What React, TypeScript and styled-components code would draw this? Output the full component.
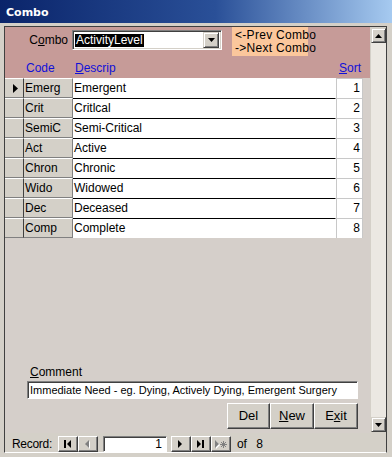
import styled, { createGlobalStyle } from 'styled-components';

const GlobalStyle = createGlobalStyle`
  html, body {
    margin: 0;
    padding: 0;
    background: #d4d0c8;
  }
  body {
    font-family: "Liberation Sans", Arial, sans-serif;
    font-size: 12px;
    color: #000;
  }
`;

const rows = [
  { code: 'Emerg', descrip: 'Emergent', sort: 1 },
  { code: 'Crit', descrip: 'Critlcal', sort: 2 },
  { code: 'SemiC', descrip: 'Semi-Critical', sort: 3 },
  { code: 'Act', descrip: 'Active', sort: 4 },
  { code: 'Chron', descrip: 'Chronic', sort: 5 },
  { code: 'Wido', descrip: 'Widowed', sort: 6 },
  { code: 'Dec', descrip: 'Deceased', sort: 7 },
  { code: 'Comp', descrip: 'Complete', sort: 8 },
];

const COLS = '19px 49px 263px 27px';

const Window = styled.div`
  width: 392px;
  height: 457px;
  display: flex;
  flex-direction: column;
  background: #d4d0c8;
  overflow: hidden;
`;

const TitleBar = styled.div`
  height: 23px;
  flex: none;
  display: flex;
  align-items: center;
  padding: 2px 0 0 6px;
  box-sizing: border-box;
  background: linear-gradient(to right, #0a246a 0%, #2a5098 55%, #a6caf0 100%);
  color: #fff;
  font-family: "DejaVu Sans", Verdana, sans-serif;
  font-weight: bold;
  font-size: 11px;
`;

const Frame = styled.div`
  flex: 1;
  display: flex;
  padding: 3px 5px 4px 4px;
  min-height: 0;
`;

const Client = styled.div`
  flex: 1;
  display: flex;
  flex-direction: column;
  border: 1px solid #404040;
  border-bottom-color: #fff;
`;

const Main = styled.div`
  flex: 1;
  display: flex;
  min-height: 0;
`;

const FormArea = styled.div`
  width: 365px;
  display: flex;
  flex-direction: column;
  background: #d5cfca;
`;

const Header = styled.div`
  height: 51px;
  flex: none;
  background: #c69b98;
  display: flex;
  flex-direction: column;
`;

const HeaderTop = styled.div`
  height: 30px;
  display: flex;
  align-items: flex-start;
`;

const ComboLabel = styled.div`
  width: 63px;
  margin-top: 3px;
  line-height: 20px;
  text-align: right;
`;

const ComboBox = styled.div`
  width: 150px;
  height: 20px;
  margin: 3px 0 0 4px;
  box-sizing: border-box;
  background: #fff;
  border: 1px solid;
  border-color: #808080 #fff #fff #808080;
  box-shadow: inset 1px 1px 0 #404040, inset -1px -1px 0 #d4d0c8;
  display: flex;
  align-items: center;
  padding: 0 2px 0 2px;
`;

const Selected = styled.span`
  background: #000;
  color: #fff;
  line-height: 13px;
  padding: 0 1px;
`;

const DropButton = styled.div`
  margin-left: auto;
  width: 16px;
  height: 16px;
  box-sizing: border-box;
  background: #d4d0c8;
  border: 1px solid;
  border-color: #d4d0c8 #404040 #404040 #d4d0c8;
  box-shadow: inset 1px 1px 0 #fff, inset -1px -1px 0 #808080;
  display: flex;
  align-items: center;
  justify-content: center;
`;

const PrevNext = styled.div`
  width: 76px;
  height: 29px;
  margin-left: 10px;
  box-sizing: border-box;
  background: #fbc79c;
  padding: 2px 0 0 3px;
  line-height: 13px;
  white-space: nowrap;
  letter-spacing: 0.3px;
`;

const LabelRow = styled.div`
  flex: 1;
  display: grid;
  grid-template-columns: ${COLS};
  align-items: center;
  color: #1010d8;
`;

const ColLabel = styled.div<{ $right?: boolean }>`
  padding: ${(p) => (p.$right ? '0 2px 0 0' : '0 0 0 2px')};
  text-align: ${(p) => (p.$right ? 'right' : 'left')};
`;

const Detail = styled.div`
  flex: 1;
`;

const Row = styled.div`
  display: grid;
  grid-template-columns: ${COLS};
  height: 20px;
`;

const Selector = styled.div`
  box-sizing: border-box;
  background: #d4d0c8;
  border-top: 1px solid #fff;
  border-right: 1px solid #404040;
  border-bottom: 1px solid #808080;
  display: flex;
  align-items: center;
  justify-content: center;
  padding-left: 2px;
`;

const Cell = styled.div<{ $kind: 'code' | 'descrip' | 'sort'; $first?: boolean }>`
  box-sizing: border-box;
  line-height: 18px;
  white-space: nowrap;
  overflow: hidden;
  background: ${(p) => (p.$kind === 'code' ? '#d4d0c8' : '#fff')};
  padding: ${(p) => (p.$kind === 'sort' ? '0 2px 0 0' : '0 0 0 1px')};
  text-align: ${(p) => (p.$kind === 'sort' ? 'right' : 'left')};
  border-top: 1px solid
    ${(p) =>
      p.$kind === 'code' ? '#fff' : p.$kind === 'sort' ? '#c8c8c8' : p.$first ? '#fff' : '#000'};
  border-right: 1px solid ${(p) => (p.$kind === 'code' ? '#808080' : p.$kind === 'sort' ? '#c8c8c8' : '#fff')};
  border-left: ${(p) => (p.$kind === 'sort' ? '1px solid #c8c8c8' : 'none')};
  border-bottom: ${(p) => (p.$kind === 'code' ? '1px solid #808080' : 'none')};
`;

const Footer = styled.div`
  height: 71px;
  flex: none;
  display: flex;
  flex-direction: column;
  padding: 0 12px 0 22px;
`;

const FooterLabel = styled.div`
  margin-top: 3px;
  line-height: 14px;
  padding-left: 3px;
`;

const TextBox = styled.div`
  margin-top: 2px;
  height: 18px;
  box-sizing: border-box;
  background: #fff;
  border: 1px solid;
  border-color: #808080 #fff #fff #808080;
  box-shadow: inset 1px 1px 0 #404040;
  line-height: 16px;
  padding-left: 2px;
  font-size: 11px;
  white-space: nowrap;
  overflow: hidden;
`;

const ButtonRow = styled.div`
  margin-top: 4px;
  display: flex;
  justify-content: flex-end;
`;

const Button = styled.div<{ $w: number }>`
  width: ${(p) => p.$w}px;
  height: 26px;
  box-sizing: border-box;
  background: #d4d0c8;
  border: 1px solid;
  border-color: #fff #404040 #404040 #fff;
  box-shadow: inset -1px -1px 0 #808080;
  display: flex;
  align-items: center;
  justify-content: center;
  font-size: 13px;
  padding-bottom: 1px;
`;

const U = styled.span`
  text-decoration: underline;
  text-underline-offset: 1px;
`;

const ScrollCol = styled.div`
  width: 16px;
  box-sizing: border-box;
  padding: 1px 0 1px 1px;
  display: flex;
  flex-direction: column;
`;

const ScrollTrack = styled.div`
  flex: 1;
  background: #ebe8e2;
`;

const ScrollButton = styled.div`
  width: 15px;
  height: 15px;
  flex: none;
  box-sizing: border-box;
  background: #d4d0c8;
  border: 1px solid;
  border-color: #d4d0c8 #404040 #404040 #d4d0c8;
  box-shadow: inset 1px 1px 0 #fff, inset -1px -1px 0 #808080;
  display: flex;
  align-items: center;
  justify-content: center;
`;

const NavBar = styled.div`
  height: 19px;
  flex: none;
  box-sizing: border-box;
  padding: 3px 0 0 7px;
  display: flex;
  align-items: center;
  font-size: 12px;
`;

const NavLabel = styled.span`
  margin-right: 6px;
  letter-spacing: -0.3px;
`;

const NavButton = styled.div<{ $gap?: number }>`
  width: 20px;
  height: 16px;
  margin-left: ${(p) => p.$gap ?? 0}px;
  box-sizing: border-box;
  background: #d4d0c8;
  border: 1px solid;
  border-color: #fff #404040 #404040 #fff;
  box-shadow: inset -1px -1px 0 #808080;
  display: flex;
  align-items: center;
  justify-content: center;
`;

const NavBox = styled.div`
  width: 64px;
  height: 16px;
  margin-left: 5px;
  box-sizing: border-box;
  background: #fff;
  border: 1px solid;
  border-color: #808080 #fff #fff #808080;
  box-shadow: inset 1px 1px 0 #404040;
  text-align: right;
  line-height: 14px;
  padding-right: 4px;
`;

const NavOf = styled.span`
  margin-left: 6px;
  word-spacing: 6px;
`;

const Tri = ({ dir, color = '#000' }: { dir: 'up' | 'down'; color?: string }) => (
  <svg width="7" height="4" viewBox="0 0 7 4">
    <polygon points={dir === 'up' ? '3.5,0 7,4 0,4' : '0,0 7,0 3.5,4'} fill={color} />
  </svg>
);

const NavIcon = ({ kind }: { kind: 'first' | 'prev' | 'next' | 'last' | 'new' }) => {
  const gray = '#808080';
  switch (kind) {
    case 'first':
      return (
        <svg width="8" height="8" viewBox="0 0 8 8">
          <rect x="0" y="0" width="2" height="8" fill="#000" />
          <polygon points="7,0 7,8 3,4" fill="#000" />
        </svg>
      );
    case 'prev':
      return (
        <svg width="6" height="9" viewBox="0 0 6 9">
          <polygon points="5,1 5,9 1,5" fill="#fff" />
          <polygon points="4,0 4,8 0,4" fill={gray} />
        </svg>
      );
    case 'next':
      return (
        <svg width="5" height="8" viewBox="0 0 5 8">
          <polygon points="0,0 0,8 4,4" fill="#000" />
        </svg>
      );
    case 'last':
      return (
        <svg width="8" height="8" viewBox="0 0 8 8">
          <polygon points="0,0 0,8 4,4" fill="#000" />
          <rect x="5" y="0" width="2" height="8" fill="#000" />
        </svg>
      );
    default:
      return (
        <svg width="12" height="9" viewBox="0 0 12 9">
          <polygon points="1,1 1,9 5,5" fill="#fff" />
          <polygon points="0,0 0,8 4,4" fill={gray} />
          <g stroke={gray} strokeWidth="1">
            <line x1="8.5" y1="1" x2="8.5" y2="8" />
            <line x1="5" y1="4.5" x2="12" y2="4.5" />
            <line x1="6" y1="2" x2="11" y2="7" />
            <line x1="11" y1="2" x2="6" y2="7" />
          </g>
        </svg>
      );
  }
};

export default function App() {
  return (
    <>
      <GlobalStyle />
      <Window>
        <TitleBar>Combo</TitleBar>
        <Frame>
          <Client>
            <Main>
              <FormArea>
                <Header>
                  <HeaderTop>
                    <ComboLabel>
                      C<U>o</U>mbo
                    </ComboLabel>
                    <ComboBox>
                      <Selected>ActivityLevel</Selected>
                      <DropButton>
                        <Tri dir="down" />
                      </DropButton>
                    </ComboBox>
                    <PrevNext>
                      &lt;-Prev Combo
                      <br />
                      -&gt;Next Combo
                    </PrevNext>
                  </HeaderTop>
                  <LabelRow>
                    <span />
                    <ColLabel>Code</ColLabel>
                    <ColLabel>
                      <U>D</U>escrip
                    </ColLabel>
                    <ColLabel $right>
                      <U>S</U>ort
                    </ColLabel>
                  </LabelRow>
                </Header>
                <Detail>
                  {rows.map((r, i) => (
                    <Row key={r.code}>
                      <Selector>
                        {i === 0 && (
                          <svg width="5" height="9" viewBox="0 0 5 9">
                            <polygon points="0,0 5,4.5 0,9" fill="#000" />
                          </svg>
                        )}
                      </Selector>
                      <Cell $kind="code">{r.code}</Cell>
                      <Cell $kind="descrip" $first={i === 0}>
                        {r.descrip}
                      </Cell>
                      <Cell $kind="sort">{r.sort}</Cell>
                    </Row>
                  ))}
                </Detail>
                <Footer>
                  <FooterLabel>
                    <U>C</U>omment
                  </FooterLabel>
                  <TextBox>Immediate Need - eg. Dying, Actively Dying, Emergent Surgery</TextBox>
                  <ButtonRow>
                    <Button $w={43}>Del</Button>
                    <Button $w={44}>
                      <U>N</U>ew
                    </Button>
                    <Button $w={44}>
                      E<U>x</U>it
                    </Button>
                  </ButtonRow>
                </Footer>
              </FormArea>
              <ScrollCol>
                <ScrollButton>
                  <Tri dir="up" />
                </ScrollButton>
                <ScrollTrack />
                <ScrollButton>
                  <Tri dir="down" />
                </ScrollButton>
              </ScrollCol>
            </Main>
            <NavBar>
              <NavLabel>Record:</NavLabel>
              <NavButton>
                <NavIcon kind="first" />
              </NavButton>
              <NavButton>
                <NavIcon kind="prev" />
              </NavButton>
              <NavBox>1</NavBox>
              <NavButton $gap={4}>
                <NavIcon kind="next" />
              </NavButton>
              <NavButton>
                <NavIcon kind="last" />
              </NavButton>
              <NavButton>
                <NavIcon kind="new" />
              </NavButton>
              <NavOf>of 8</NavOf>
            </NavBar>
          </Client>
        </Frame>
      </Window>
    </>
  );
}
